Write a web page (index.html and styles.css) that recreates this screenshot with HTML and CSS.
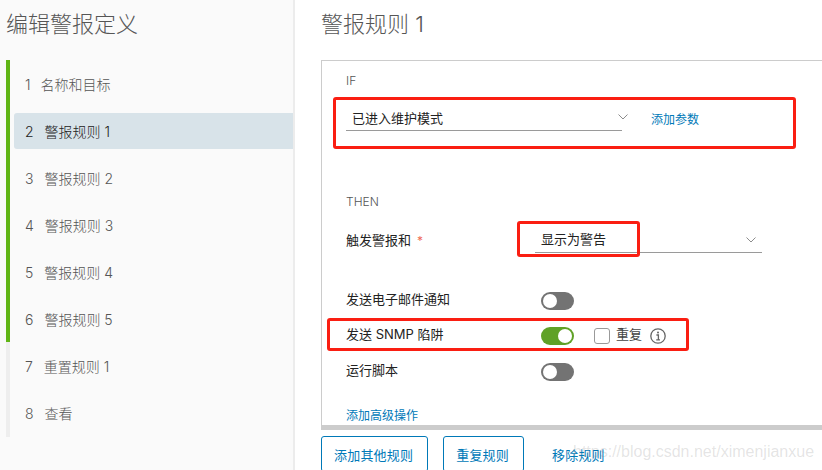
FILE: index.html
```html
<!DOCTYPE html>
<html lang="zh">
<head>
<meta charset="utf-8">
<title>编辑警报定义</title>
<link rel="stylesheet" href="styles.css">
</head>
<body>
<div class="page">
  <aside class="sidebar">
    <h1 class="side-title">编辑警报定义</h1>
    <ol class="steps">
      <li class="step done"><div class="step-row tight"><span>1</span><span>名称和目标</span></div></li>
      <li class="step done"><div class="step-row active"><span>2</span><span>警报规则 1</span></div></li>
      <li class="step done"><div class="step-row"><span>3</span><span>警报规则 2</span></div></li>
      <li class="step done"><div class="step-row"><span>4</span><span>警报规则 3</span></div></li>
      <li class="step done"><div class="step-row"><span>5</span><span>警报规则 4</span></div></li>
      <li class="step done"><div class="step-row"><span>6</span><span>警报规则 5</span></div></li>
      <li class="step"><div class="step-row"><span>7</span><span>重置规则 1</span></div></li>
      <li class="step"><div class="step-row"><span>8</span><span>查看</span></div></li>
    </ol>
  </aside>
  <main class="main">
    <h2 class="main-title">警报规则 1</h2>
    <section class="card">
      <div class="section-label">IF</div>
      <div class="if-row">
        <div class="select select-wide">
          <span>已进入维护模式</span>
          <svg class="chevron" width="10" height="6" viewBox="0 0 10 6"><path d="M.5.5L5 5 9.500.5" fill="none" stroke="#8c8c8c" stroke-width="1"/></svg>
        </div>
        <a class="link">添加参数</a>
      </div>
      <div class="section-label then-label">THEN</div>
      <div class="trigger-row">
        <div class="trigger-label">触发警报和<span class="req">*</span></div>
        <div class="select select-mid">
          <span>显示为警告</span>
          <svg class="chevron" width="10" height="6" viewBox="0 0 10 6"><path d="M.5.5L5 5 9.500.5" fill="none" stroke="#8c8c8c" stroke-width="1"/></svg>
        </div>
      </div>
      <div class="opt-row opt-email">
        <div class="opt-label">发送电子邮件通知</div>
        <div class="toggle"></div>
      </div>
      <div class="opt-row opt-snmp">
        <div class="opt-label">发送 SNMP 陷阱</div>
        <div class="toggle on"></div>
        <div class="checkbox"></div>
        <div class="check-label">重复</div>
        <svg class="info" width="16" height="16" viewBox="0 0 16 16"><circle cx="8" cy="8" r="7.2" fill="none" stroke="#666" stroke-width="1.3"/><path d="M6.400 7h2v4.600M6.200 11.800h3.800" fill="none" stroke="#666" stroke-width="1.300"/><circle cx="8" cy="4.600" r="1" fill="#666"/></svg>
      </div>
      <div class="opt-row opt-script">
        <div class="opt-label">运行脚本</div>
        <div class="toggle"></div>
      </div>
      <a class="link adv-link">添加高级操作</a>
    </section>
    <div class="actions">
      <button class="btn">添加其他规则</button>
      <button class="btn">重复规则</button>
      <button class="btn flat">移除规则</button>
    </div>
  </main>
  <div class="mark mark-if"></div>
  <div class="mark mark-show"></div>
  <div class="mark mark-snmp"></div>
  <div class="watermark">https://blog.csdn.net/ximenjianxue</div>
</div>
</body>
</html>
```
FILE: styles.css
```css
* { box-sizing: border-box; }
html, body { margin: 0; padding: 0; background: #fff; }
body { font-family: Inter, "Noto Sans CJK SC", sans-serif; color: #333; }
.page { position: relative; display: flex; width: 822px; height: 470px; overflow: hidden; }

.sidebar { flex: none; width: 295px; height: 470px; background: #fafafa; border-right: 2px solid #ececec; }
.side-title { margin: 0; height: 60px; padding: 9px 0 0 6px; font-size: 22px; line-height: 30px; font-weight: 300; color: #565656; }
.steps { list-style: none; margin: 0 0 0 6px; padding: 0; }
.step { height: 47px; padding: 6px 0 5px 4px; border-left: 4px solid #eee; }
.step:last-child { height: 48px; }
.step.done { border-left-color: #60b515; }
.step-row { display: flex; align-items: center; gap: 11px; height: 36px; padding-left: 11px; font-size: 14px; font-weight: 300; color: #555; border-radius: 3px 0 0 3px; }
.step-row.tight { gap: 10px; }
.step-row.active { background: #d8e3e9; color: #222; }

.main { flex: 1; min-width: 0; padding-left: 26px; }
.main-title { margin: 0; height: 60px; padding-top: 9px; font-size: 22px; line-height: 30px; font-weight: 300; color: #565656; }
.card { height: 370px; margin-right: -10px; padding: 12px 0 0 24px; border: 1px solid #ccc; border-bottom-width: 5px; border-right: 0; background: #fff; }
.section-label { height: 16px; font-size: 12px; line-height: 16px; font-weight: 300; color: #555; }
.if-row { display: flex; align-items: center; height: 26px; margin-top: 16px; }
.select { display: flex; align-items: center; justify-content: space-between; height: 26px; padding: 0 1px 1px 6px; border-bottom: 1px solid #9a9a9a; font-size: 13px; color: #222; }
.select-wide { width: 276px; }
.select-mid { width: 227px; padding-bottom: 2px; }
.chevron { flex: none; }
.select-wide .chevron { margin-right: -7px; }
.select-mid .chevron { margin-right: 5px; margin-top: 3px; }
.link { font-size: 12px; line-height: 16px; color: #0079b8; }
.if-row .link { margin-left: 29px; position: relative; top: 2px; }
.then-label { margin-top: 63px; }
.trigger-row { display: flex; height: 26px; margin-top: 17px; }
.trigger-label { width: 189px; font-size: 13px; line-height: 26px; color: #222; }
.req { margin-left: 6px; color: #ef6a55; font-size: 12px; }
.opt-row { display: flex; align-items: center; height: 18px; font-size: 13px; color: #222; }
.opt-email { margin-top: 39px; }
.opt-snmp { margin-top: 17px; }
.opt-script { margin-top: 18px; }
.opt-label { width: 195px; height: 18px; line-height: 15px; }
.toggle { position: relative; width: 33px; height: 18px; border-radius: 9px; background: #737373; }
.toggle::after { content: ""; position: absolute; left: 2px; top: 2px; width: 14px; height: 14px; border-radius: 50%; background: #fff; }
.toggle.on { background: #60a127; }
.toggle.on::after { left: 17px; }
.checkbox { width: 16px; height: 16px; margin-left: 20px; border: 1px solid #9a9a9a; border-radius: 3px; background: #fff; }
.check-label { margin-left: 6px; height: 18px; line-height: 15px; color: #444; }
.info { margin-left: 8px; }
.adv-link { display: block; margin-top: 27px; }
.actions { display: flex; margin-top: 6px; }
.btn { flex: none; height: 36px; margin-right: 15px; padding: 0 14px 0 12px; border: 1px solid #0079b8; border-radius: 3px; background: #fff; font: 13px Inter, "Noto Sans CJK SC", sans-serif; letter-spacing: .2px; color: #0079b8; }
.btn.flat { border-color: transparent; background: transparent; }

.mark { position: absolute; border: 3px solid #fa1e12; border-radius: 3px; }
.mark-if { left: 333px; top: 97px; width: 463px; height: 52px; }
.mark-show { left: 517px; top: 221px; width: 123px; height: 36px; }
.mark-snmp { left: 327px; top: 318px; width: 362px; height: 33px; }
.watermark { position: absolute; left: 573px; top: 443px; font: 16px "Liberation Sans", Arial, sans-serif; color: rgba(120,120,120,.2); white-space: nowrap; }
```
